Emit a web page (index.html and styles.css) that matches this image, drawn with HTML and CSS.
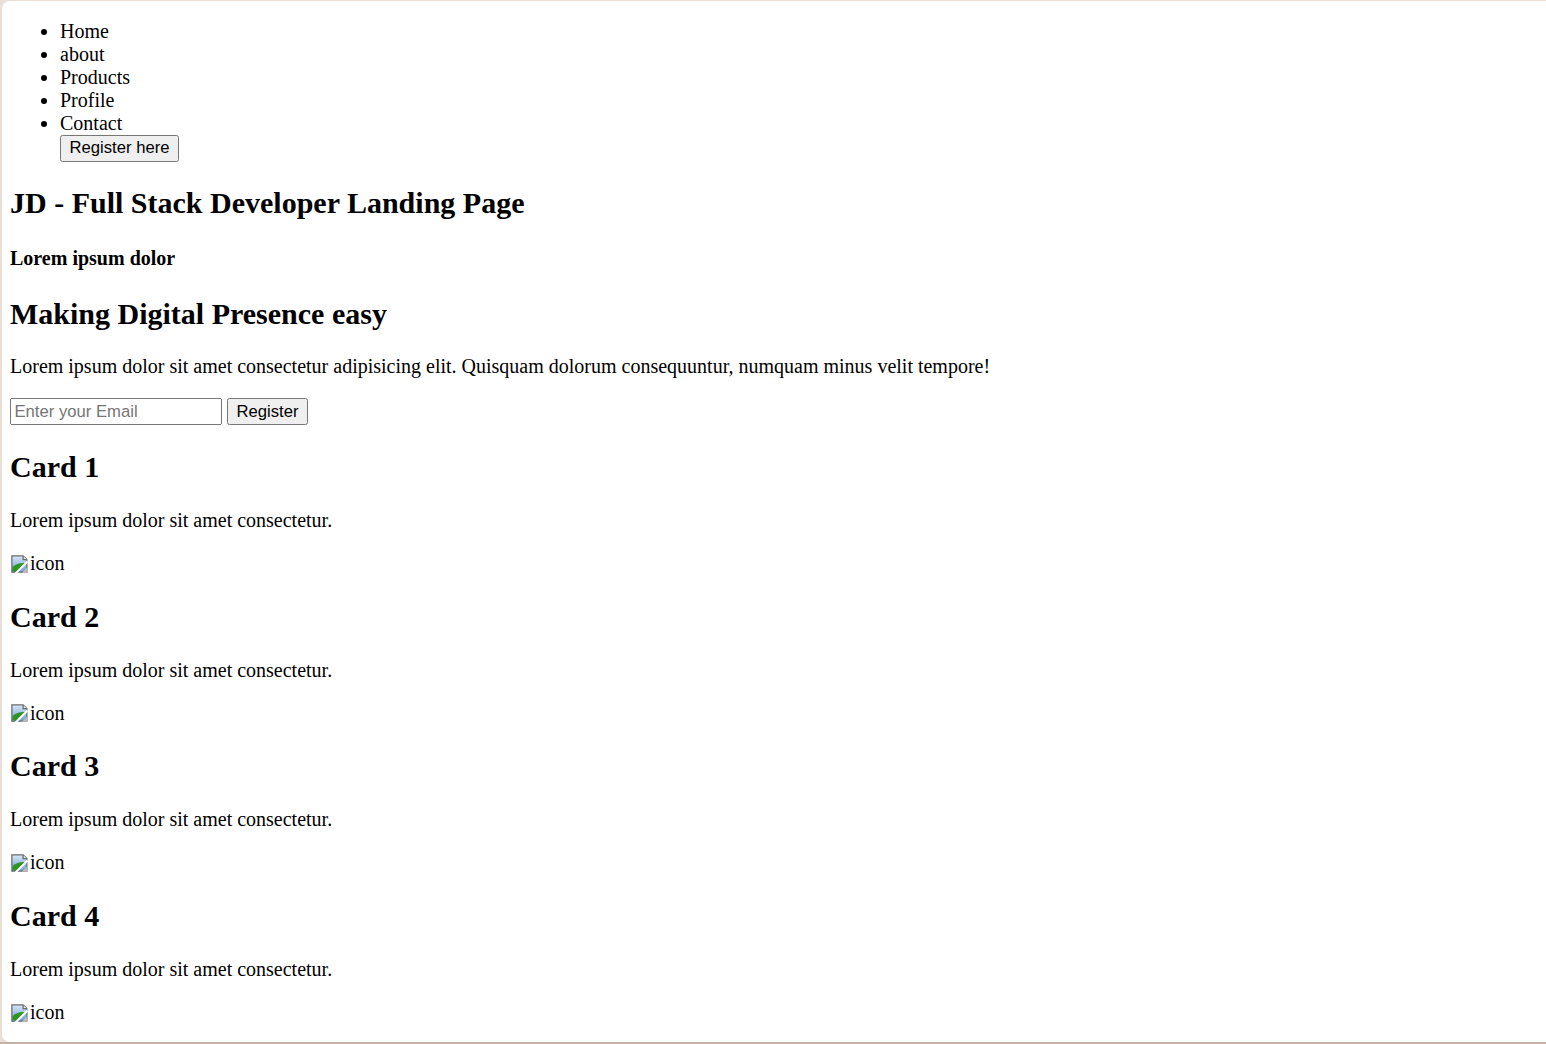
FILE: index.html
```html
<!DOCTYPE html>
<html lang="en">
<head>
<meta charset="utf-8">
<title>JD - Full Stack Developer Landing Page</title>
<link rel="stylesheet" href="styles.css">
</head>
<body>
<div class="page">
  <nav class="nav">
    <ul class="nav-list">
      <li>Home</li>
      <li>about</li>
      <li>Products</li>
      <li>Profile</li>
      <li>Contact</li>
      <li class="nav-action"><button class="btn">Register here</button></li>
    </ul>
  </nav>
  <h1 class="title">JD - Full Stack Developer Landing Page</h1>
  <h4 class="kicker">Lorem ipsum dolor</h4>
  <h2 class="heading">Making Digital Presence easy</h2>
  <p class="text">Lorem ipsum dolor sit amet consectetur adipisicing elit. Quisquam dolorum consequuntur, numquam minus velit tempore!</p>
  <form class="signup">
    <input class="email" type="email" placeholder="Enter your Email"> <button class="btn" type="button">Register</button>
  </form>
  <section class="card">
    <h2 class="heading">Card 1</h2>
    <p class="text">Lorem ipsum dolor sit amet consectetur.</p>
    <p class="text"><span class="broken"><svg class="broken-icon" viewBox="0 0 16 16" width="16" height="16"><defs><linearGradient id="sky" x1="0" y1="0" x2="0" y2="1"><stop offset="0" stop-color="#d6e6f6"/><stop offset="1" stop-color="#6f9fd3"/></linearGradient></defs><path d="M1.5 1.5h9l3 3v10h-12z" fill="url(#sky)" stroke="#6b6b6b"/><path d="M10.5 1.5v3h3" fill="#f2f2f2" stroke="#6b6b6b"/><path d="M2 14v-3.5c3-2.8 6.5-3.6 10.5-3.2l-7 6.7z" fill="#2f9424"/><path d="M4.5 15.5l9.5-9.5" stroke="#fff" stroke-width="1.6"/><path d="M9.5 15l4-4v4z" fill="#bdbdbd"/></svg>icon</span></p>
  </section>
  <section class="card">
    <h2 class="heading">Card 2</h2>
    <p class="text">Lorem ipsum dolor sit amet consectetur.</p>
    <p class="text"><span class="broken"><svg class="broken-icon" viewBox="0 0 16 16" width="16" height="16"><path d="M1.5 1.5h9l3 3v10h-12z" fill="url(#sky)" stroke="#6b6b6b"/><path d="M10.5 1.5v3h3" fill="#f2f2f2" stroke="#6b6b6b"/><path d="M2 14v-3.5c3-2.8 6.5-3.6 10.5-3.2l-7 6.7z" fill="#2f9424"/><path d="M4.5 15.5l9.5-9.5" stroke="#fff" stroke-width="1.6"/><path d="M9.5 15l4-4v4z" fill="#bdbdbd"/></svg>icon</span></p>
  </section>
  <section class="card">
    <h2 class="heading">Card 3</h2>
    <p class="text">Lorem ipsum dolor sit amet consectetur.</p>
    <p class="text"><span class="broken"><svg class="broken-icon" viewBox="0 0 16 16" width="16" height="16"><path d="M1.5 1.5h9l3 3v10h-12z" fill="url(#sky)" stroke="#6b6b6b"/><path d="M10.5 1.5v3h3" fill="#f2f2f2" stroke="#6b6b6b"/><path d="M2 14v-3.5c3-2.8 6.5-3.6 10.5-3.2l-7 6.7z" fill="#2f9424"/><path d="M4.5 15.5l9.5-9.5" stroke="#fff" stroke-width="1.6"/><path d="M9.5 15l4-4v4z" fill="#bdbdbd"/></svg>icon</span></p>
  </section>
  <section class="card">
    <h2 class="heading">Card 4</h2>
    <p class="text">Lorem ipsum dolor sit amet consectetur.</p>
    <p class="text"><span class="broken"><svg class="broken-icon" viewBox="0 0 16 16" width="16" height="16"><path d="M1.5 1.5h9l3 3v10h-12z" fill="url(#sky)" stroke="#6b6b6b"/><path d="M10.5 1.5v3h3" fill="#f2f2f2" stroke="#6b6b6b"/><path d="M2 14v-3.5c3-2.8 6.5-3.6 10.5-3.2l-7 6.7z" fill="#2f9424"/><path d="M4.5 15.5l9.5-9.5" stroke="#fff" stroke-width="1.6"/><path d="M9.5 15l4-4v4z" fill="#bdbdbd"/></svg>icon</span></p>
  </section>
</div>
</body>
</html>
```

FILE: styles.css
```css
html {
  background: #eadfd5;
  height: 100%;
  box-sizing: border-box;
  border-bottom: 2px solid #c6b2a2;
  overflow: hidden;
}

body {
  margin: 1px 0 0 2px;
  height: 1041px;
  box-sizing: border-box;
  background: #ffffff;
  border-radius: 8px 0 0 8px;
  overflow: hidden;
  color: #000;
}

.page {
  zoom: 1.25;
  padding: 0 6.4px;
  font-family: "Liberation Serif", "Times New Roman", serif;
  font-size: 16px;
  margin-top: -0.8px;
}

.nav-list {
  margin: 16px 0;
  padding-left: 40px;
}

.nav-action {
  list-style: none;
}

.btn {
  font-family: "Liberation Sans", Arial, sans-serif;
  font-size: 13.333px;
}

.email {
  font-family: "Liberation Sans", Arial, sans-serif;
  font-size: 13.333px;
  width: 169.6px;
  box-sizing: border-box;
}

.title {
  font-size: 1.5em;
  margin: 0.83em 0;
}

.kicker {
  margin: 1.33em 0;
}

.heading {
  font-size: 1.5em;
  margin: 0.83em 0;
}

.text {
  margin: 1em 0;
}

.signup {
  margin: 0;
}

.broken {
  display: inline;
}

.broken-icon {
  display: inline-block;
  width: 16px;
  height: 16px;
  vertical-align: -3px;
}
```
